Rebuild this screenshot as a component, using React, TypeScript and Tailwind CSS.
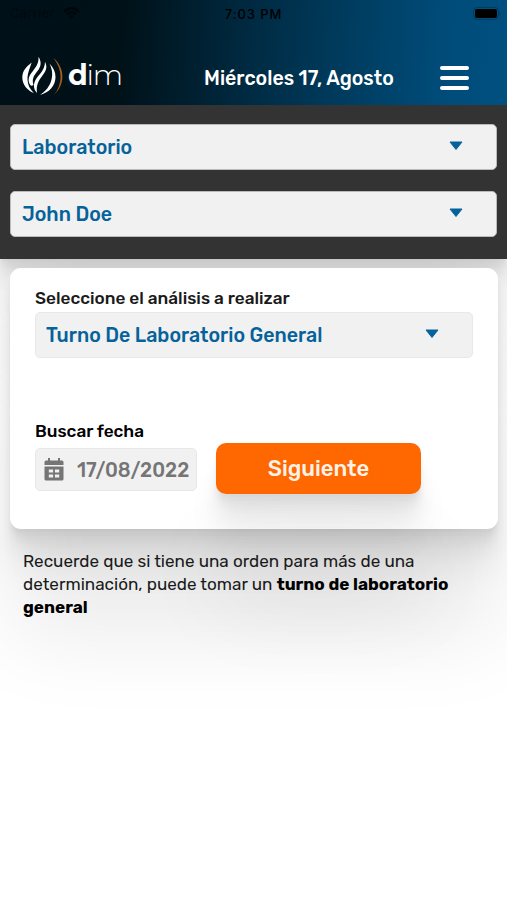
import clsx from "clsx";

const layeredShadow =
  "shadow-[0_2.8px_2.2px_rgba(0,0,0,0.02),0_6.7px_5.3px_rgba(0,0,0,0.028),0_12.5px_10px_rgba(0,0,0,0.035),0_22.3px_17.9px_rgba(0,0,0,0.042),0_41.8px_33.4px_rgba(0,0,0,0.05),0_108px_88px_rgba(0,0,0,0.08)]";

function Logo() {
  return (
    <div className="flex items-center">
      <svg width="42" height="40" viewBox="0 0 42 40" fill="none">
        <path
          d="M9.7 6.5C4 11 .3 15 .3 21.5c0 7 5 13 11.5 15.5C8 33 5.8 29 5.500 24 5.200 18 7.500 13 9.700 6.500z"
          fill="#fff"
        />
        <path
          d="M16.500 .7C21 8 17.500 12.500 14 17c-3 4-4 7-2.500 12C9 31 8 29 7 26.500 5.500 21.500 8.500 18 12 13.500c3-4 4.800-7 4.500-12.800z"
          fill="#fff"
        />
        <path
          d="M23 5.700c3 6 .5 9.500-2.500 13.800-4 5.500-6.500 9-5.500 17.500-3.500-3.500-4-8.500-1.500-13C16.500 18.500 23 14.500 23 5.700z"
          fill="#fff"
        />
        <path
          d="M27.500 7.500c4 4.500 6 8.500 6 13.500 0 8.500-6 15.500-15.500 18 5.500-3.500 10-9 11.500-15.500 1.500-6 .5-10.500-2-16z"
          fill="#fff"
        />
        <path d="M31.500 2c11.500 10 12 26 .5 37 9-12 8.700-25-.5-37z" fill="#a8611c" />
      </svg>
      <span className="mb-[2px] ml-[4px] font-['Montserrat','Lato',sans-serif] text-[28.5px] leading-[36px] tracking-[-1.2px] text-white">
        <b>d</b>
        <span className="font-light">im</span>
      </span>
    </div>
  );
}

type SelectFieldProps = {
  label: string;
  className: string;
};

function SelectField({ label, className }: SelectFieldProps) {
  return (
    <button
      type="button"
      className={clsx(
        "flex h-[46px] w-full items-center justify-between rounded-[5px] border bg-[#f1f1f1] pr-[33px] text-left text-[19.6px] font-medium text-[#06629a]",
        className,
      )}
    >
      <span className="pt-[2px]">{label}</span>
      <svg width="14" height="10" viewBox="0 0 14 10" className="mb-[3px]">
        <path
          d="M1 1h12L7 8.500z"
          fill="#06629a"
          stroke="#06629a"
          strokeWidth="1"
          strokeLinejoin="round"
        />
      </svg>
    </button>
  );
}

function StatusBar() {
  return (
    <div className="grid h-7 grid-cols-3 items-center px-[10px] font-['Inter'] text-[13px] text-black">
      <div className="flex items-center gap-2 text-[#00090e]">
        <span className="tracking-[0.3px]">Carrier</span>
        <svg width="17" height="13" viewBox="0 0 17 13" className="mb-[2px]" fill="none">
          <path d="M1 4.5Q8.5-2 16 4.5" stroke="#00070b" strokeWidth="2.6" />
          <path d="M3.8 7.3Q8.5 3 13.2 7.3" stroke="#00070b" strokeWidth="2.6" />
          <path d="M6 9.3Q8.5 7.3 11 9.3L8.5 12z" fill="#00070b" />
        </svg>
      </div>
      <span className="pt-[1px] text-center font-medium tracking-[0.9px]">7:03 PM</span>
      <svg width="28" height="14" viewBox="0 0 28 14" className="-mr-[4px] justify-self-end">
        <rect
          x="0.5"
          y="0.5"
          width="25"
          height="12"
          rx="3.5"
          fill="none"
          stroke="#003b60"
        />
        <rect x="2" y="2" width="22" height="9" rx="2" fill="#000" />
        <path d="M26.500 4.500q2 2.200 0 4.400z" fill="#003b60" />
      </svg>
    </div>
  );
}

function CalendarIcon() {
  return (
    <svg width="20" height="23" viewBox="0 0 20 23" fill="#757575">
      <path d="M4 0h2v4H4zM14 0h2v4h-2z" />
      <path d="M2 2.500h16A1.500 1.500 0 0 1 19.500 4v3H.5V4A1.500 1.500 0 0 1 2 2.500z" />
      <path
        fillRule="evenodd"
        d="M.5 8.500h19v12.500a1.500 1.500 0 0 1-1.500 1.500H2A1.500 1.500 0 0 1 .5 21zM4.800 11.500v3h4.300v-3zm6.100 0v3h4.300v-3zM4.800 16.500v3h4.300v-3zm6.100 0v3h4.300v-3z"
      />
    </svg>
  );
}

export default function App() {
  return (
    <div className="flex min-h-[900px] w-full flex-col overflow-hidden bg-white font-['Rubik','Roboto',sans-serif]">
      <header className="h-[105px] bg-[linear-gradient(94deg,#001018_0%,#001118_24%,#002b43_50%,#003b5d_67%,#004b78_86%,#005080_100%)]">
        <StatusBar />
        <div className="flex h-[77px] items-center pl-[22px]">
          <div className="mt-[19px] w-[182px]">
            <Logo />
          </div>
          <h1 className="mt-[24px] text-[19.6px] font-medium whitespace-nowrap text-white">
            Miércoles 17, Agosto
          </h1>
          <button
            type="button"
            aria-label="Menú"
            className="mt-[22px] mr-[38px] ml-auto flex w-[29px] flex-col gap-[6px]"
          >
            <span className="h-1 rounded-full bg-white" />
            <span className="h-1 rounded-full bg-white" />
            <span className="h-1 rounded-full bg-white" />
          </button>
        </div>
      </header>

      <section
        className={clsx(
          "flex h-[154px] flex-col gap-[21px] bg-[#333] px-[10px] pt-[19px]",
          layeredShadow,
        )}
      >
        <SelectField label="Laboratorio" className="border-[#bbb] pl-[11px]" />
        <SelectField label="John Doe" className="border-[#bbb] pl-[11px]" />
      </section>

      <main className="flex flex-col">
        <form
          className={clsx(
            "mr-[9px] ml-[10px] mt-[9px] h-[261px] rounded-[11px] bg-white px-[25px] pt-[19px]",
            layeredShadow,
          )}
        >
          <p className="h-[25px] text-[17.2px] leading-[22px] font-medium text-[#1a1a1a]">
            Seleccione el análisis a realizar
          </p>
          <SelectField
            label="Turno De Laboratorio General"
            className="border-[#e8e8e8] pl-[10px]"
          />
          <div className="mt-[61px] flex items-start">
            <div className="w-[162px]">
              <p className="h-[28px] text-[17.2px] leading-[24px] font-medium text-black">
                Buscar fecha
              </p>
              <div className="mt-[1px] flex h-[43px] items-center gap-[13px] rounded-[5px] border border-[#e8e8e8] bg-[#f1f1f1] pl-[8px] text-[19.6px] font-medium text-[#757575]">
                <CalendarIcon />
                <span className="pt-[2px]">17/08/2022</span>
              </div>
            </div>
            <button
              type="button"
              className={clsx(
                "mt-[24px] ml-[19px] h-[51px] w-[205px] rounded-[10px] bg-[#ff6700] text-[22px] font-medium text-[#fff3e8]",
                layeredShadow,
              )}
            >
              Siguiente
            </button>
          </div>
        </form>

        <p className="px-[23px] pt-[21px] text-[17.1px] leading-[23px] text-[#1a1a1a]">
          <span className="block whitespace-nowrap">
            Recuerde que si tiene una orden para más de una
          </span>
          <span className="block whitespace-nowrap">
            determinación, puede tomar un{" "}
            <b className="text-black">turno de laboratorio</b>
          </span>
          <b className="block text-black">general</b>
        </p>
      </main>
    </div>
  );
}
